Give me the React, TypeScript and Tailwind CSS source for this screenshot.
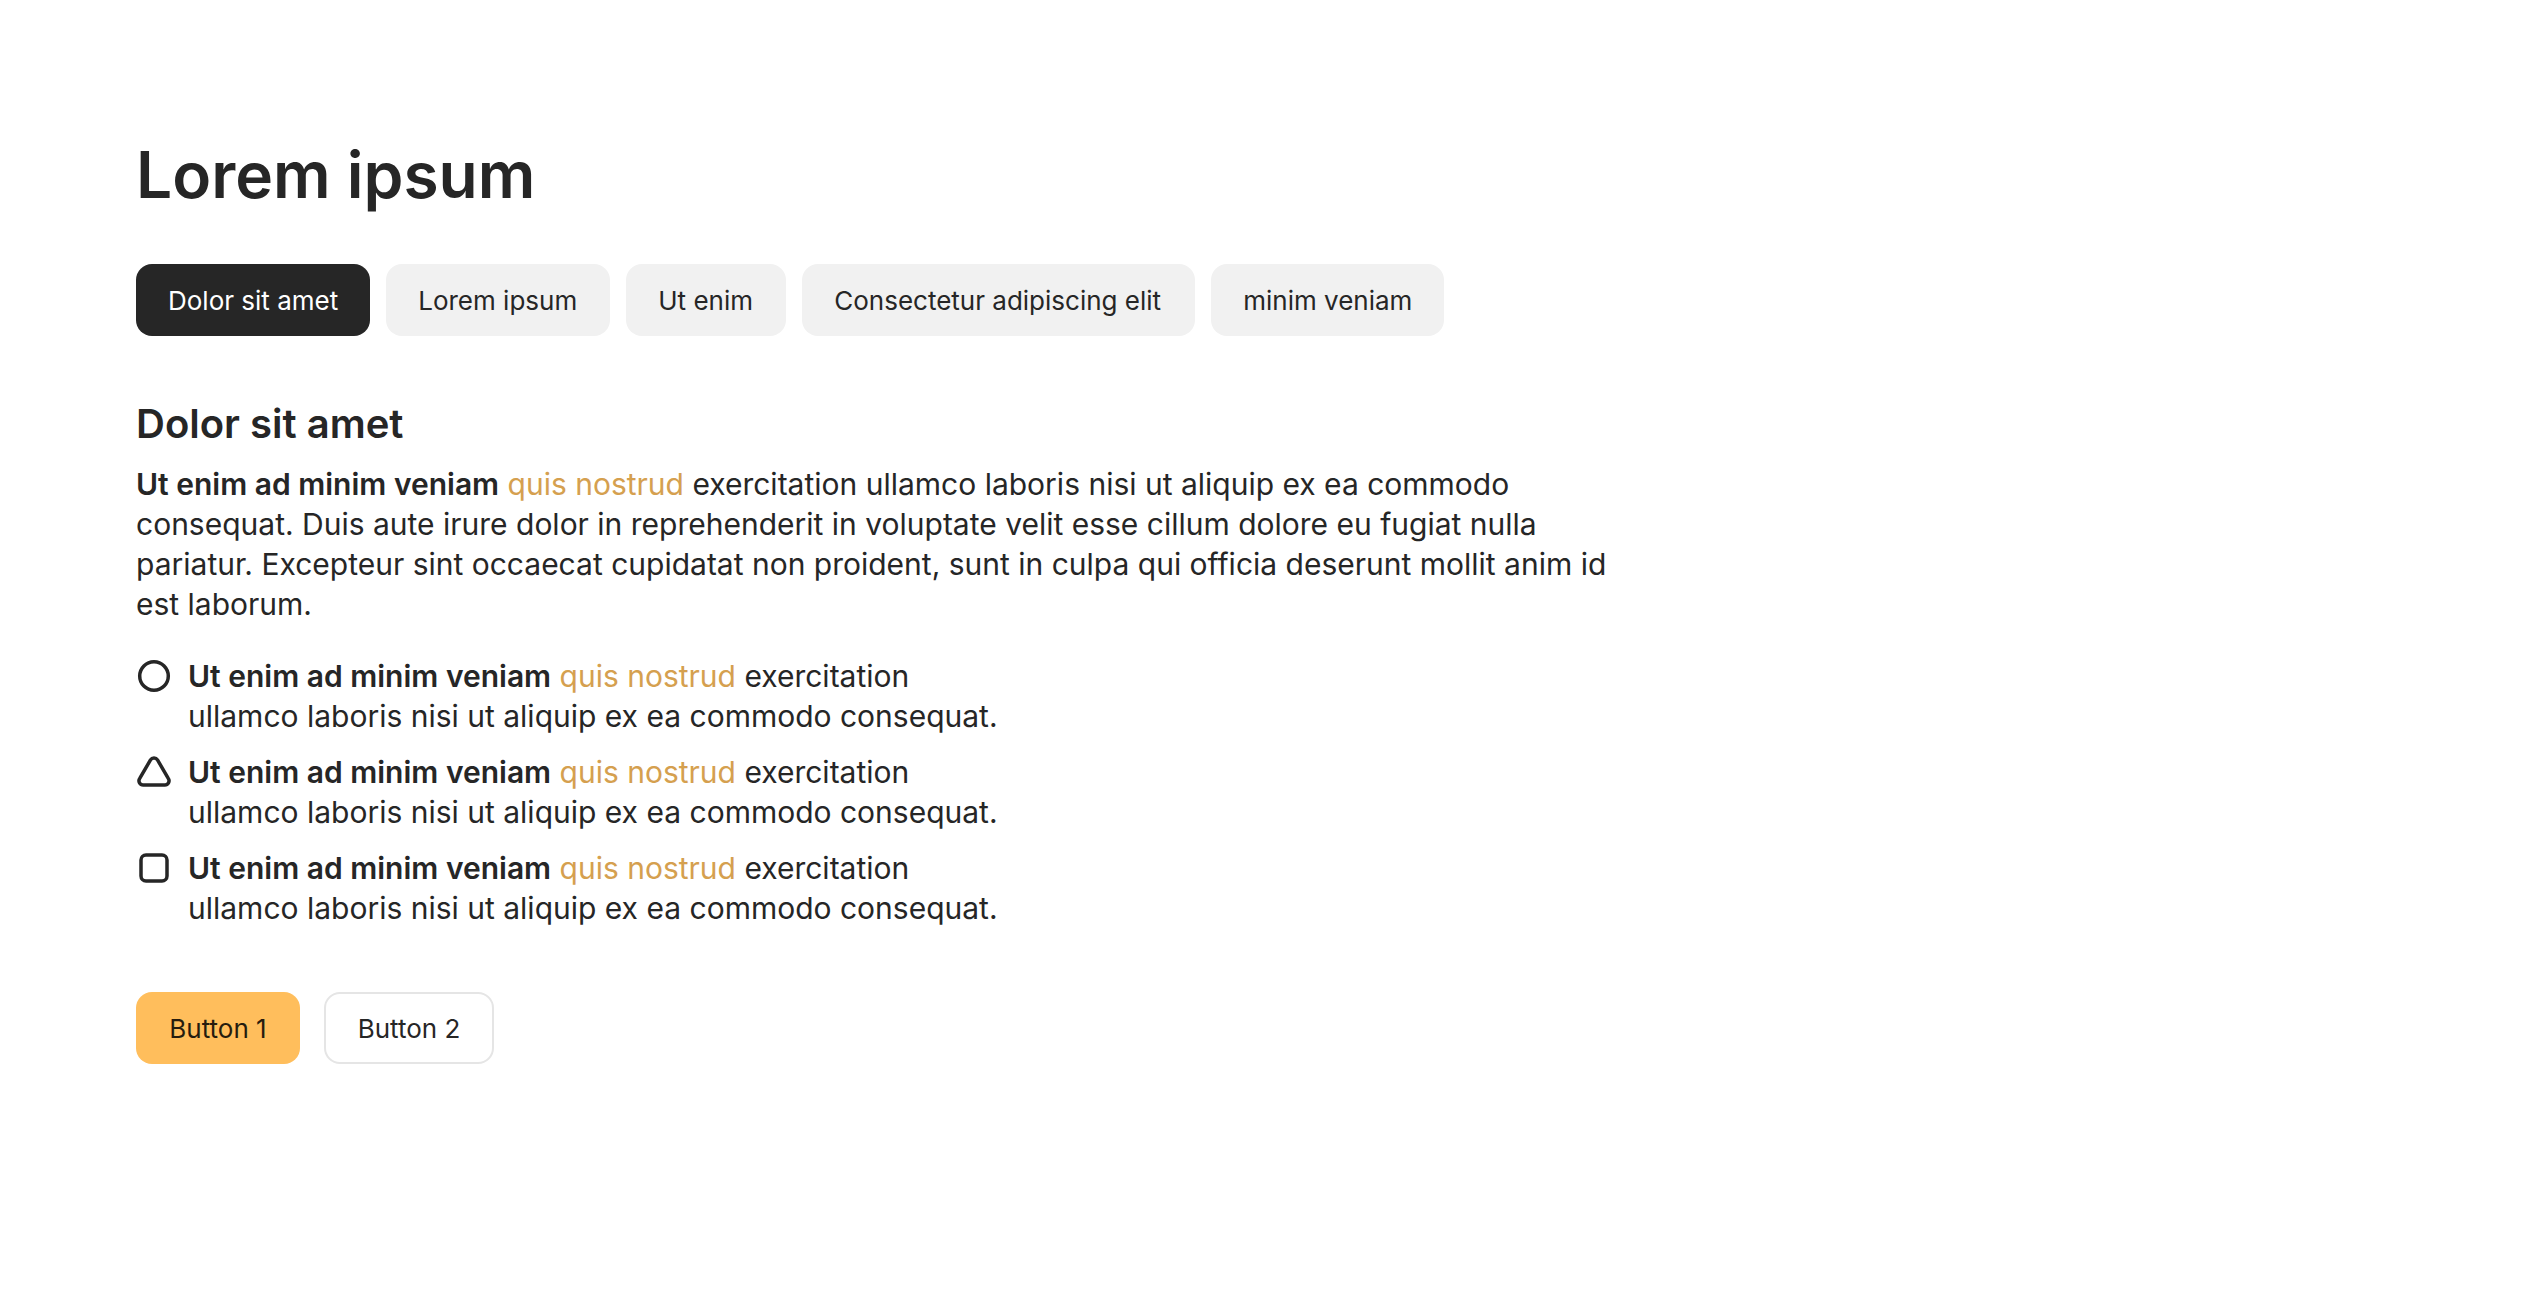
import React, { useState, type ReactNode } from "react";

const tabs = [
  { label: "Dolor sit amet", width: "min-w-[234px]" },
  { label: "Lorem ipsum", width: "min-w-[224px]" },
  { label: "Ut enim", width: "min-w-[160px]" },
  { label: "Consectetur adipiscing elit", width: "min-w-[393px]" },
  { label: "minim veniam", width: "min-w-[232px]" },
];

function Shape({ children }: { children: ReactNode }) {
  return (
    <svg
      viewBox="0 0 36 40"
      className="h-10 w-9 shrink-0"
      fill="none"
      stroke="currentColor"
      strokeWidth="3.5"
      strokeLinejoin="round"
      aria-hidden="true"
    >
      {children}
    </svg>
  );
}

const shapes = [
  <circle cx="18" cy="20" r="14.3" />,
  <path d="M14.5 7.9a4.1 4.1 0 0 1 7 0L32.4 26.6a4.2 4.2 0 0 1-3.6 6.4H7.2a4.2 4.2 0 0 1-3.6-6.4Z" />,
  <rect x="5" y="7" width="26" height="26" rx="5" />,
];

function Lead() {
  return (
    <>
      <strong className="font-semibold">Ut enim ad minim veniam</strong>{" "}
      <a href="#nostrud" className="text-[#d5a04f]">
        quis nostrud
      </a>{" "}
      exercitation
    </>
  );
}

export default function App() {
  const [active, setActive] = useState(0);
  return (
    <main className="px-[136px] pt-[136px] font-['Inter',sans-serif] text-[#262626]">
      <h1 className="text-[64px] leading-[78px] font-semibold">Lorem ipsum</h1>
      <nav className="mt-[50px] flex flex-wrap gap-4">
        {tabs.map(({ label, width }, i) => (
          <button
            key={label}
            type="button"
            onClick={() => setActive(i)}
            className={`h-[72px] rounded-2xl px-8 text-left text-[26px] whitespace-nowrap ${width} ${
              i === active ? "bg-[#262626] text-white" : "bg-[#f1f1f1]"
            }`}
          >
            {label}
          </button>
        ))}
      </nav>
      <section className="mt-16 max-w-[1500px] text-[30px] leading-10">
        <h2 className="text-[40px] leading-[48px] font-semibold">Dolor sit amet</h2>
        <p className="mt-4">
          <Lead /> ullamco laboris nisi ut aliquip ex ea commodo consequat. Duis aute irure dolor in
          reprehenderit in voluptate velit esse cillum dolore eu fugiat nulla pariatur. Excepteur sint
          occaecat cupidatat non proident, sunt in culpa qui officia deserunt mollit anim id est laborum.
        </p>
        <ul className="mt-8 flex flex-col gap-4">
          {shapes.map((shape, i) => (
            <li key={i} className="flex gap-4">
              <Shape>{shape}</Shape>
              <p>
                <Lead />
                <br />
                ullamco laboris nisi ut aliquip ex ea commodo consequat.
              </p>
            </li>
          ))}
        </ul>
      </section>
      <div className="mt-16 flex gap-6 text-[26px]">
        <button type="button" className="h-[72px] min-w-[164px] rounded-2xl bg-[#ffbe5c] px-8 text-[#261c0e]">
          Button 1
        </button>
        <button type="button" className="h-[72px] min-w-[170px] rounded-2xl border-2 border-[#e5e5e5] px-[30px]">
          Button 2
        </button>
      </div>
    </main>
  );
}
